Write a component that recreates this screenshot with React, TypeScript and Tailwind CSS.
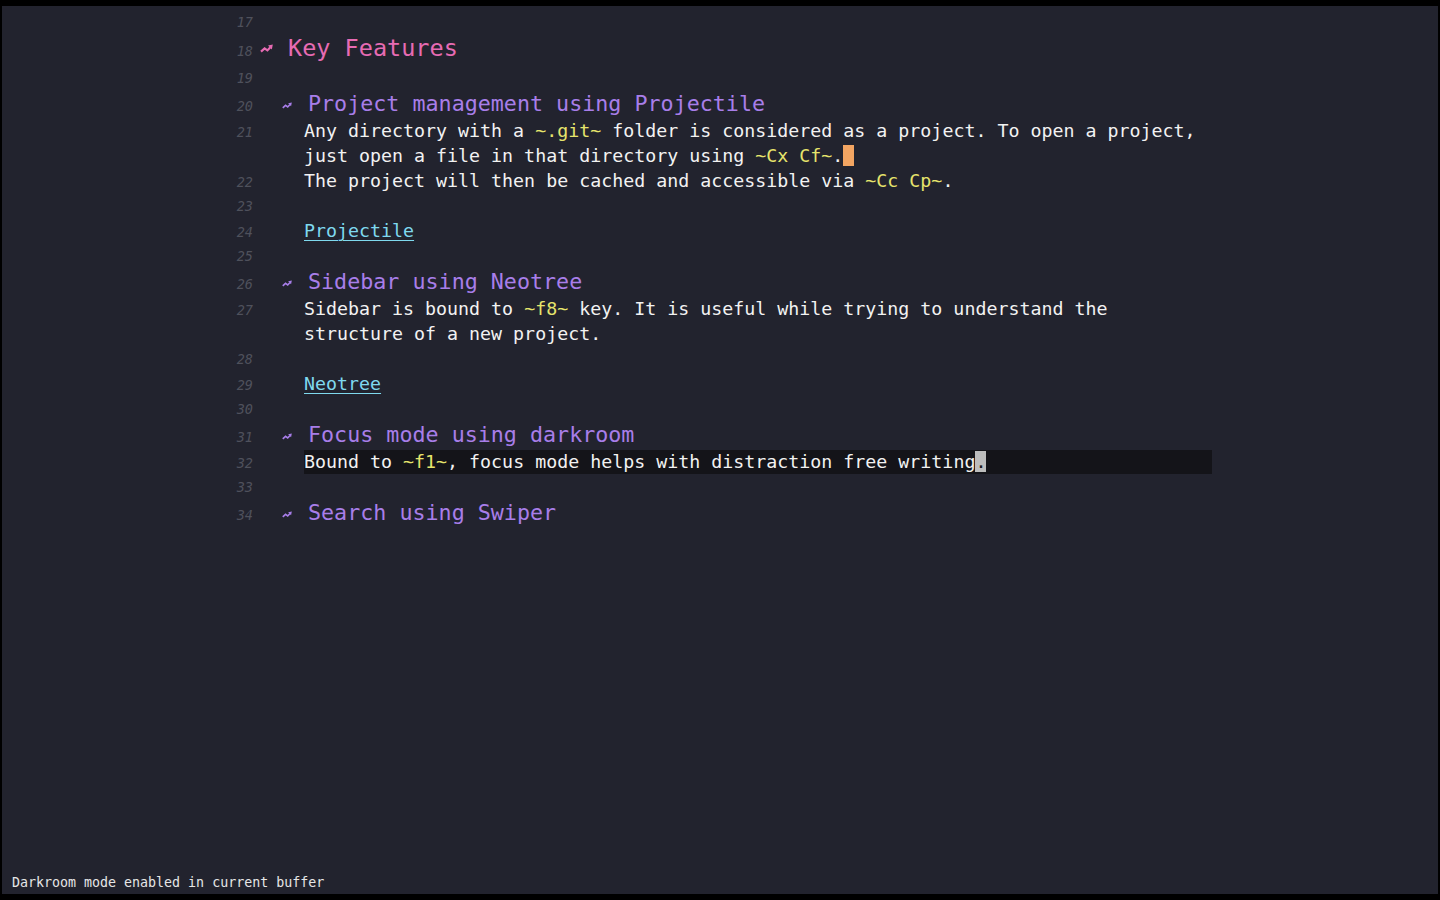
import React from "react";

type Seg = { t: string; k?: "code" | "dot" | "cursor" };
type Row =
  | { n?: number; kind: "empty" }
  | { n?: number; kind: "h1"; text: string }
  | { n?: number; kind: "h2"; text: string }
  | { n?: number; kind: "link"; text: string }
  | { n?: number; kind: "body"; segs: Seg[]; hl?: boolean };

const rows: Row[] = [
  { n: 17, kind: "empty" },
  { n: 18, kind: "h1", text: "Key Features" },
  { n: 19, kind: "empty" },
  { n: 20, kind: "h2", text: "Project management using Projectile" },
  {
    n: 21,
    kind: "body",
    segs: [
      { t: "Any directory with a " },
      { t: "~.git~", k: "code" },
      { t: " folder is considered as a project. To open a project," },
    ],
  },
  {
    kind: "body",
    segs: [
      { t: "just open a file in that directory using " },
      { t: "~Cx Cf~", k: "code" },
      { t: "." },
      { t: " ", k: "cursor" },
    ],
  },
  {
    n: 22,
    kind: "body",
    segs: [
      { t: "The project will then be cached and accessible via " },
      { t: "~Cc Cp~", k: "code" },
      { t: "." },
    ],
  },
  { n: 23, kind: "empty" },
  { n: 24, kind: "link", text: "Projectile" },
  { n: 25, kind: "empty" },
  { n: 26, kind: "h2", text: "Sidebar using Neotree" },
  {
    n: 27,
    kind: "body",
    segs: [
      { t: "Sidebar is bound to " },
      { t: "~f8~", k: "code" },
      { t: " key. It is useful while trying to understand the" },
    ],
  },
  { kind: "body", segs: [{ t: "structure of a new project." }] },
  { n: 28, kind: "empty" },
  { n: 29, kind: "link", text: "Neotree" },
  { n: 30, kind: "empty" },
  { n: 31, kind: "h2", text: "Focus mode using darkroom" },
  {
    n: 32,
    kind: "body",
    hl: true,
    segs: [
      { t: "Bound to " },
      { t: "~f1~", k: "code" },
      { t: ", focus mode helps with distraction free writing" },
      { t: ".", k: "dot" },
    ],
  },
  { n: 33, kind: "empty" },
  { n: 34, kind: "h2", text: "Search using Swiper" },
];

// the org-superstar style zigzag bullet
function Bullet({ big }: { big?: boolean }) {
  return (
    <span
      className={
        big
          ? "inline-flex w-[14px] justify-start"
          : "inline-flex w-[13px] justify-start"
      }
    >
      <svg
        width={big ? 13 : 10}
        height={big ? 9 : 7}
        viewBox="0 0 13 9"
        className="inline-block align-middle"
      >
        <path
          d="M1 7.6 L4.6 4.4 L7.4 6.4 L10.4 3.2"
          fill="none"
          stroke="currentColor"
          strokeWidth="2.2"
          strokeLinejoin="miter"
        />
        <path d="M8 1.6 L12.8 0.6 L11.8 5.4 Z" fill="currentColor" />
      </svg>
    </span>
  );
}

function LineNo({ n }: { n?: number }) {
  return (
    <span className="w-[33px] shrink-0 text-right italic text-[13.5px] text-[#4f515c]">
      {n ?? ""}
    </span>
  );
}

function Line({ row }: { row: Row }) {
  if (row.kind === "h1") {
    return (
      <div className="flex items-baseline h-[31px] leading-[21px]">
        <LineNo n={row.n} />
        <span className="ml-[7px] text-[23.5px] text-[#e76bb3] whitespace-pre">
          <span className="align-[3px]">
            <Bullet big />
          </span>
          <span className="inline-block w-[14px]"> </span>
          {row.text}
        </span>
      </div>
    );
  }
  if (row.kind === "h2") {
    return (
      <div className="flex items-baseline h-[28px] leading-[22px]">
        <LineNo n={row.n} />
        <span className="ml-[29px] text-[21.7px] text-[#a87ee9] whitespace-pre">
          <span className="align-[2px]">
            <Bullet />
          </span>
          <span className="inline-block w-[13px]"> </span>
          {row.text}
        </span>
      </div>
    );
  }
  if (row.kind === "link") {
    return (
      <div className="flex items-baseline h-[25px] leading-[24px]">
        <LineNo n={row.n} />
        <span className="ml-[51px] text-[18.3px] text-[#7fd9ee] underline underline-offset-[3px] decoration-1 whitespace-pre">
          {row.text}
        </span>
      </div>
    );
  }
  if (row.kind === "body") {
    return (
      <div className="flex items-baseline h-[25px] leading-[24px]">
        <LineNo n={row.n} />
        <span
          className={
            row.hl
              ? "ml-[51px] w-[908px] bg-[#141419] text-[18.3px] text-[#f2f2f2] whitespace-pre"
              : "ml-[51px] text-[18.3px] text-[#f2f2f2] whitespace-pre"
          }
        >
          {row.segs.map((s, i) =>
            s.k === "code" ? (
              <span key={i} className="text-[#e6e46c]">
                {s.t}
              </span>
            ) : s.k === "cursor" ? (
              <span key={i} className="bg-[#f3a562]">
                {s.t}
              </span>
            ) : s.k === "dot" ? (
              <span key={i} className="bg-[#bdbdbd] text-[#1a1a1a]">
                {s.t}
              </span>
            ) : (
              <span key={i}>{s.t}</span>
            )
          )}
        </span>
      </div>
    );
  }
  return (
    <div className="flex items-baseline h-[25px] leading-[24px]">
      <LineNo n={row.n} />
    </div>
  );
}

export default function App() {
  return (
    <div className="h-screen w-full bg-black pt-[6px] pb-[6px] px-[2px] font-['DejaVu_Sans_Mono',monospace]">
      <div className="h-full bg-[#22232e] flex flex-col">
        <div className="flex-1 pt-[4px] pl-[218px]">
          {rows.map((r, i) => (
            <Line key={i} row={r} />
          ))}
        </div>
        <div className="h-[22px] leading-[22px] pl-[10px] text-[13.3px] text-[#e6e6e6] whitespace-pre">
          Darkroom mode enabled in current buffer
        </div>
      </div>
    </div>
  );
}
